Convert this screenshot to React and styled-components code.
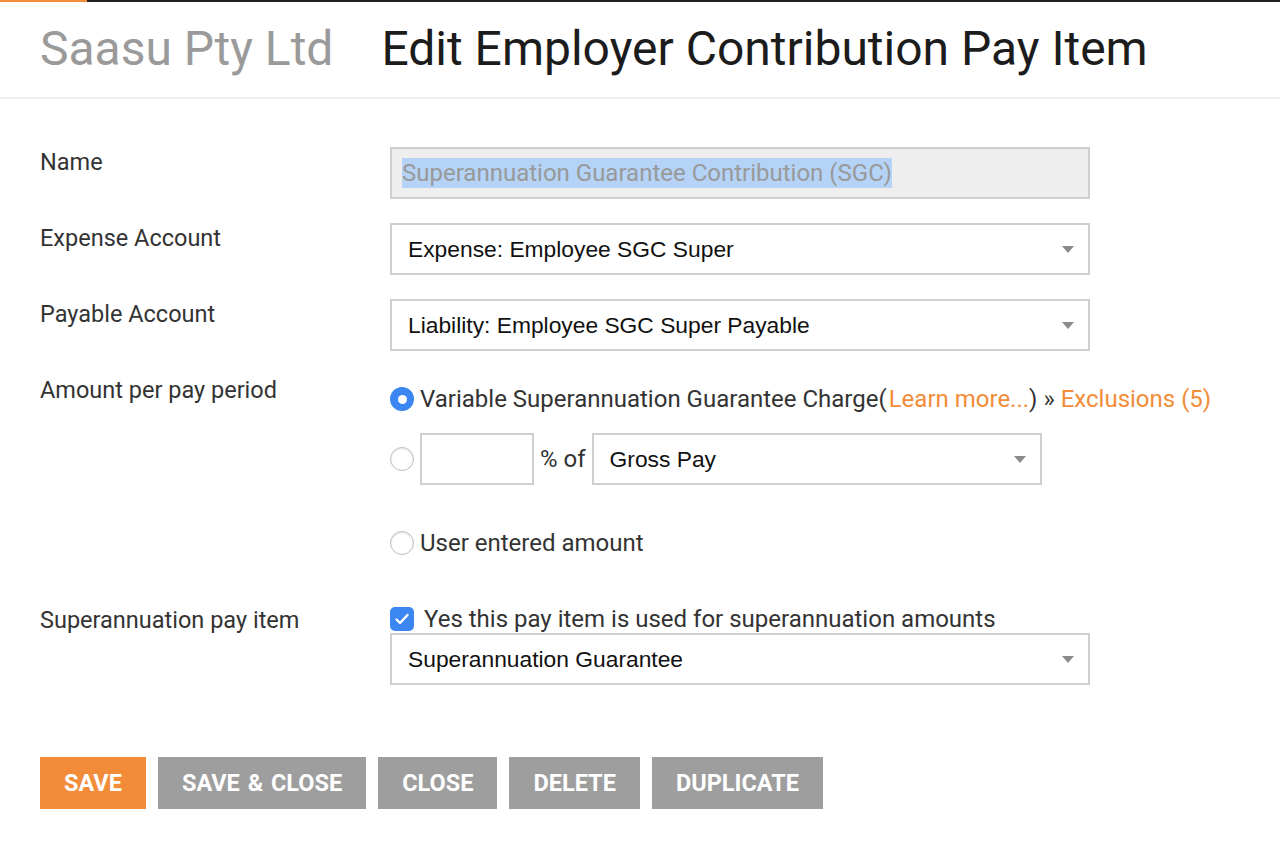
import styled, { createGlobalStyle } from "styled-components";

const Global = createGlobalStyle`
  html, body { margin: 0; padding: 0; background: #fff; }
  body { font-family: Roboto, "Liberation Sans", sans-serif; color: #333; }
  * { box-sizing: border-box; }
`;

const TopBar = styled.div`
  height: 2px;
  background: linear-gradient(to right, #f28c38 0, #f28c38 87px, #222 87px);
`;

const Header = styled.header`
  height: 97px;
  display: flex;
  align-items: center;
  padding: 0 40px 2px;
  gap: 48px;
  border-bottom: 2px solid #eee;
  font-size: 48px;
  line-height: 1;
`;

const Company = styled.span`
  color: #9a9a9a;
`;

const Title = styled.h1`
  margin: 0;
  font-size: 48px;
  font-weight: 400;
  color: #1c1c1c;
`;

const Form = styled.div`
  padding: 48px 40px 0;
  display: flex;
  flex-direction: column;
`;

const Row = styled.div`
  display: grid;
  grid-template-columns: 350px 1fr;
  margin-bottom: ${(p) => p.gap ?? 24}px;
`;

const Label = styled.div`
  font-size: 23.5px;
  line-height: 28px;
  padding-top: 1px;
  color: #333;
`;

const Field = styled.div`
  display: flex;
  flex-direction: column;
`;

const Box = styled.div`
  width: ${(p) => p.w || 700}px;
  height: 52px;
  border: 2px solid #cfcfcf;
  background: ${(p) => (p.disabled ? "#eee" : "#fff")};
  display: flex;
  align-items: center;
  padding: 0 ${(p) => (p.pad ?? 16)}px;
  font-family: ${(p) => (p.disabled ? "Roboto" : '"Liberation Sans"')}, sans-serif;
  font-size: ${(p) => (p.disabled ? 24 : 22.8)}px;
  color: ${(p) => (p.disabled ? "#999" : "#111")};
  position: relative;
`;

const Selected = styled.span`
  background: #b4d3f7;
  padding: 1px 0;
  line-height: 28px;
`;

const Arrow = styled.span`
  position: absolute;
  right: 14px;
  top: 50%;
  margin-top: -3px;
  width: 0;
  height: 0;
  border-left: 6px solid transparent;
  border-right: 6px solid transparent;
  border-top: 7px solid #8a8a8a;
`;

const Line = styled.div`
  display: flex;
  align-items: center;
  height: ${(p) => p.h || 48}px;
  margin-top: ${(p) => p.mt || 0}px;
  font-size: 24px;
  color: #333;
`;

const Radio = styled.span`
  width: 24px;
  height: 24px;
  border-radius: 50%;
  flex-shrink: 0;
  margin-right: 6px;
  background: ${(p) => (p.on ? "#3b86f0" : "#fff")};
  border: ${(p) => (p.on ? "none" : "1px solid #bdbdbd")};
  box-shadow: ${(p) => (p.on ? "none" : "inset 0 1px 2px rgba(0,0,0,0.12)")};
  display: flex;
  align-items: center;
  justify-content: center;
  &::after {
    content: "";
    display: ${(p) => (p.on ? "block" : "none")};
    width: 9px;
    height: 9px;
    border-radius: 50%;
    background: #fff;
  }
`;

const Link = styled.span`
  color: #f28c38;
  margin-left: ${(p) => p.ml || 0}px;
`;

const Small = styled.span`
  margin: 0 6px;
`;

const Check = styled.span`
  width: 24px;
  height: 24px;
  border-radius: 5px;
  background: #3b86f0;
  display: flex;
  align-items: center;
  justify-content: center;
  margin-right: 10px;
`;

const Buttons = styled.div`
  display: flex;
  gap: 12px;
  margin-top: 72px;
`;

const Button = styled.button`
  height: 52px;
  border: none;
  padding: 0 24px;
  background: ${(p) => (p.primary ? "#f28c38" : "#9e9e9e")};
  color: #fff;
  font-family: Roboto, sans-serif;
  font-weight: 700;
  font-size: 23.5px;
  word-spacing: 2px;
  cursor: pointer;
`;

export default function App() {
  return (
    <>
      <Global />
      <TopBar />
      <Header>
        <Company>Saasu Pty Ltd</Company>
        <Title>Edit Employer Contribution Pay Item</Title>
      </Header>
      <Form>
        <Row>
          <Label>Name</Label>
          <Field>
            <Box disabled pad={10}>
              <Selected>Superannuation Guarantee Contribution (SGC)</Selected>
            </Box>
          </Field>
        </Row>
        <Row>
          <Label>Expense Account</Label>
          <Field>
            <Box>
              Expense: Employee SGC Super
              <Arrow />
            </Box>
          </Field>
        </Row>
        <Row>
          <Label>Payable Account</Label>
          <Field>
            <Box>
              Liability: Employee SGC Super Payable
              <Arrow />
            </Box>
          </Field>
        </Row>
        <Row gap={38}>
          <Label>Amount per pay period</Label>
          <Field>
            <Line>
              <Radio on />
              Variable Superannuation Guarantee Charge(<Link ml={2}>Learn more...</Link>)
              <Small>»</Small>
              <Link>Exclusions (5)</Link>
            </Line>
            <Line h={52} mt={10}>
              <Radio />
              <Box w={114} />
              <Small>% of</Small>
              <Box w={450}>
                Gross Pay
                <Arrow />
              </Box>
            </Line>
            <Line mt={34}>
              <Radio />
              User entered amount
            </Line>
          </Field>
        </Row>
        <Row gap={0}>
          <Label>Superannuation pay item</Label>
          <Field>
            <Line h={28}>
              <Check>
                <svg width="16" height="16" viewBox="0 0 16 16">
                  <path d="M2.5 8.5l3.5 3.5 7.5-8" fill="none" stroke="#fff" strokeWidth="2.4" strokeLinecap="round" strokeLinejoin="round" />
                </svg>
              </Check>
              Yes this pay item is used for superannuation amounts
            </Line>
            <Box>
              Superannuation Guarantee
              <Arrow />
            </Box>
          </Field>
        </Row>
        <Buttons>
          <Button primary>SAVE</Button>
          <Button>SAVE &amp; CLOSE</Button>
          <Button>CLOSE</Button>
          <Button>DELETE</Button>
          <Button>DUPLICATE</Button>
        </Buttons>
      </Form>
    </>
  );
}
